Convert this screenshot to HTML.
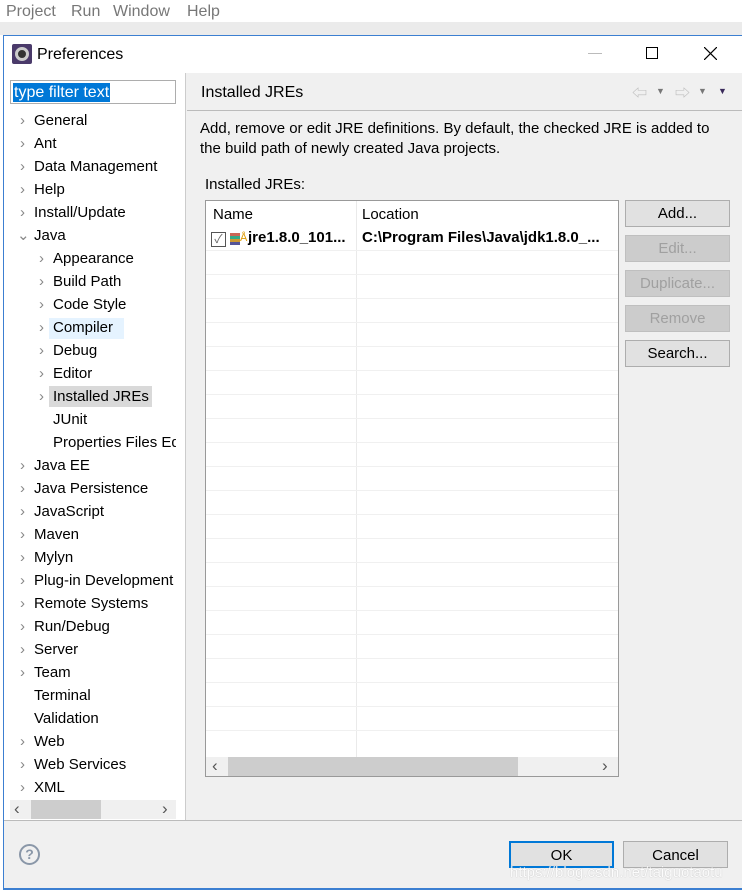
<!DOCTYPE html>
<html><head><meta charset="utf-8"><style>
*{margin:0;padding:0;box-sizing:border-box}
body{width:742px;height:890px;overflow:hidden;background:#fff;font-family:"Liberation Sans","Noto Sans CJK SC",sans-serif;font-size:15px;color:#000;position:relative}
.a{position:absolute}
.menu{top:0;left:0;width:742px;height:22px;background:#fff;color:#777;font-size:16px}
.menu span{position:absolute;top:3px}
.dlg{left:3px;top:35px;width:745px;height:855px;background:#f0f0f0;border-left:1px solid #3c7fd1;border-top:1px solid #3c7fd1}
.ti{white-space:nowrap;line-height:20px}
.arr{color:#888;font-size:15px}
.btn{background:#e1e1e1;border:1px solid #adadad;text-align:center;line-height:26px;height:27px;width:105px}
.dis{background:#cccccc;border-color:#bfbfbf;color:#a0a0a0}
.row{border-bottom:1px solid #f0f0f0;height:24px}
</style></head><body>
<div class="a menu"><span style="left:6px">Project</span><span style="left:71px">Run</span><span style="left:113px">Window</span><span style="left:187px">Help</span></div>
<div class="a" style="top:22px;left:0;width:742px;height:13px;background:#ebebeb"></div>
<div class="a dlg"></div>
<div class="a" style="left:4px;top:36px;width:738px;height:37px;background:#fff"></div>
<div class="a" style="left:12px;top:44px;width:20px;height:20px;background:#4a3a6a;border-radius:2px"></div>
<div class="a" style="left:15px;top:47px;width:14px;height:14px;border:3px solid #ccc;border-radius:50%;background:#333"></div>
<div class="a" style="left:37px;top:46px;font-size:16px">Preferences</div>
<div class="a" style="left:588px;top:53px;width:14px;height:1px;background:#bbb"></div>
<div class="a" style="left:646px;top:47px;width:12px;height:12px;border:1px solid #000"></div>
<svg class="a" style="left:704px;top:47px" width="13" height="13"><path d="M0 0L13 13M13 0L0 13" stroke="#000" stroke-width="1.2"/></svg>
<div class="a" style="left:4px;top:73px;width:182px;height:747px;background:#fff;border-right:1px solid #ccc"></div>
<div class="a" style="left:10px;top:80px;width:166px;height:24px;border:1px solid #adadad;background:#fff"></div>
<div class="a" style="left:13px;top:83px;height:19px;line-height:19px;background:#0078d7;color:#fff;padding:0 1px;font-size:16px">type filter text</div>
<div class="a" style="left:49px;top:318px;width:75px;height:21px;background:#e5f3ff"></div>
<div class="a" style="left:49px;top:386px;width:103px;height:21px;background:#d9d9d9"></div>
<div class="a" style="left:0;top:111px">
<div class="a ti" style="top:0;left:20px"><span class="arr">›</span></div><div class="a ti" style="top:0;left:34px">General</div>
<div class="a ti" style="top:23px;left:20px"><span class="arr">›</span></div><div class="a ti" style="top:23px;left:34px">Ant</div>
<div class="a ti" style="top:46px;left:20px"><span class="arr">›</span></div><div class="a ti" style="top:46px;left:34px">Data Management</div>
<div class="a ti" style="top:69px;left:20px"><span class="arr">›</span></div><div class="a ti" style="top:69px;left:34px">Help</div>
<div class="a ti" style="top:92px;left:20px"><span class="arr">›</span></div><div class="a ti" style="top:92px;left:34px">Install/Update</div>
<div class="a ti" style="top:115px;left:17px"><span class="arr">⌄</span></div><div class="a ti" style="top:115px;left:34px">Java</div>
<div class="a ti" style="top:138px;left:39px"><span class="arr">›</span></div><div class="a ti" style="top:138px;left:53px">Appearance</div>
<div class="a ti" style="top:161px;left:39px"><span class="arr">›</span></div><div class="a ti" style="top:161px;left:53px">Build Path</div>
<div class="a ti" style="top:184px;left:39px"><span class="arr">›</span></div><div class="a ti" style="top:184px;left:53px">Code Style</div>
<div class="a ti" style="top:207px;left:39px"><span class="arr">›</span></div><div class="a ti" style="top:207px;left:53px">Compiler</div>
<div class="a ti" style="top:230px;left:39px"><span class="arr">›</span></div><div class="a ti" style="top:230px;left:53px">Debug</div>
<div class="a ti" style="top:253px;left:39px"><span class="arr">›</span></div><div class="a ti" style="top:253px;left:53px">Editor</div>
<div class="a ti" style="top:276px;left:39px"><span class="arr">›</span></div><div class="a ti" style="top:276px;left:53px">Installed JREs</div>
<div class="a ti" style="top:299px;left:53px">JUnit</div>
<div class="a ti" style="top:322px;left:53px;width:123px;overflow:hidden">Properties Files Editor</div>
<div class="a ti" style="top:345px;left:20px"><span class="arr">›</span></div><div class="a ti" style="top:345px;left:34px">Java EE</div>
<div class="a ti" style="top:368px;left:20px"><span class="arr">›</span></div><div class="a ti" style="top:368px;left:34px">Java Persistence</div>
<div class="a ti" style="top:391px;left:20px"><span class="arr">›</span></div><div class="a ti" style="top:391px;left:34px">JavaScript</div>
<div class="a ti" style="top:414px;left:20px"><span class="arr">›</span></div><div class="a ti" style="top:414px;left:34px">Maven</div>
<div class="a ti" style="top:437px;left:20px"><span class="arr">›</span></div><div class="a ti" style="top:437px;left:34px">Mylyn</div>
<div class="a ti" style="top:460px;left:20px"><span class="arr">›</span></div><div class="a ti" style="top:460px;left:34px;width:142px;overflow:hidden">Plug-in Development</div>
<div class="a ti" style="top:483px;left:20px"><span class="arr">›</span></div><div class="a ti" style="top:483px;left:34px">Remote Systems</div>
<div class="a ti" style="top:506px;left:20px"><span class="arr">›</span></div><div class="a ti" style="top:506px;left:34px">Run/Debug</div>
<div class="a ti" style="top:529px;left:20px"><span class="arr">›</span></div><div class="a ti" style="top:529px;left:34px">Server</div>
<div class="a ti" style="top:552px;left:20px"><span class="arr">›</span></div><div class="a ti" style="top:552px;left:34px">Team</div>
<div class="a ti" style="top:575px;left:34px">Terminal</div>
<div class="a ti" style="top:598px;left:34px">Validation</div>
<div class="a ti" style="top:621px;left:20px"><span class="arr">›</span></div><div class="a ti" style="top:621px;left:34px">Web</div>
<div class="a ti" style="top:644px;left:20px"><span class="arr">›</span></div><div class="a ti" style="top:644px;left:34px">Web Services</div>
<div class="a ti" style="top:667px;left:20px"><span class="arr">›</span></div><div class="a ti" style="top:667px;left:34px">XML</div>
</div>
<div class="a" style="left:10px;top:800px;width:166px;height:19px;background:#f0f0f0"></div>
<div class="a" style="left:31px;top:800px;width:70px;height:19px;background:#cdcdcd"></div>
<div class="a" style="left:14px;top:799px;color:#555;font-size:17px">‹</div>
<div class="a" style="left:162px;top:799px;color:#555;font-size:17px">›</div>
<div class="a" style="left:187px;top:110px;width:555px;height:1px;background:#bbb"></div>
<div class="a" style="left:201px;top:84px;font-size:16px">Installed JREs</div>
<div class="a" style="left:632px;top:82px;color:#bbb;font-size:15px">⇦</div>
<div class="a" style="left:656px;top:86px;color:#777;font-size:9px">▼</div>
<div class="a" style="left:675px;top:82px;color:#bbb;font-size:15px">⇨</div>
<div class="a" style="left:698px;top:86px;color:#777;font-size:9px">▼</div>
<div class="a" style="left:718px;top:86px;color:#3a2a5a;font-size:9px">▼</div>
<div class="a" style="left:200px;top:119px;line-height:20px;width:530px">Add, remove or edit JRE definitions. By default, the checked JRE is added to the build path of newly created Java projects.</div>
<div class="a" style="left:205px;top:176px">Installed JREs:</div>
<div class="a" style="left:205px;top:200px;width:414px;height:577px;border:1px solid #999;background:#fff;overflow:hidden">
<div class="a" style="left:150px;top:0;width:1px;height:556px;background:#eaeaea"></div>
<div class="a" style="left:7px;top:5px">Name</div>
<div class="a" style="left:156px;top:5px">Location</div>
<div class="a" style="left:0;top:26px;width:412px">
<div class="row" style="position:relative">
<div class="a" style="left:5px;top:5px;width:15px;height:15px;border:1px solid #555;color:#666;font-size:12px;line-height:13px;text-align:center">✓</div>
<div class="a" style="left:24px;top:6px;width:10px;height:12px;background:linear-gradient(#c65 0 3px,#3a8 3px 6px,#c93 6px 9px,#559 9px)"></div>
<div class="a" style="left:34px;top:5px;color:#d90;font-size:11px">Å</div>
<div class="a" style="left:42px;top:2px;font-weight:bold">jre1.8.0_101...</div>
<div class="a" style="left:156px;top:2px;font-weight:bold">C:\Program Files\Java\jdk1.8.0_...</div>
</div>
<div class="row"></div><div class="row"></div><div class="row"></div><div class="row"></div><div class="row"></div><div class="row"></div><div class="row"></div><div class="row"></div><div class="row"></div><div class="row"></div><div class="row"></div><div class="row"></div><div class="row"></div><div class="row"></div><div class="row"></div><div class="row"></div><div class="row"></div><div class="row"></div><div class="row"></div><div class="row"></div>
</div>
<div class="a" style="left:0;top:556px;width:412px;height:19px;background:#f0f0f0"></div>
<div class="a" style="left:22px;top:556px;width:290px;height:19px;background:#cdcdcd"></div>
<div class="a" style="left:6px;top:555px;color:#555;font-size:17px">‹</div>
<div class="a" style="left:396px;top:555px;color:#555;font-size:17px">›</div>
</div>
<div class="a btn" style="left:625px;top:200px">Add...</div>
<div class="a btn dis" style="left:625px;top:235px">Edit...</div>
<div class="a btn dis" style="left:625px;top:270px">Duplicate...</div>
<div class="a btn dis" style="left:625px;top:305px">Remove</div>
<div class="a btn" style="left:625px;top:340px">Search...</div>
<div class="a" style="left:4px;top:820px;width:738px;height:1px;background:#bbb"></div>
<div class="a" style="left:19px;top:844px;width:21px;height:21px;border:2px solid #8a97a8;border-radius:50%;color:#8a97a8;text-align:center;font-weight:bold;line-height:17px;font-size:14px">?</div>
<div class="a btn" style="left:509px;top:841px;border:2px solid #0078d7;line-height:25px">OK</div>
<div class="a btn" style="left:623px;top:841px;line-height:27px">Cancel</div>
<div class="a" style="left:510px;top:864px;color:#fff;font-size:15px;opacity:.8;text-shadow:0 0 1px #999">https://blog.csdn.net/taiguotaotu</div>
<div class="a" style="left:3px;top:888px;width:739px;height:2px;background:#3c7fd1"></div>
</body></html>
